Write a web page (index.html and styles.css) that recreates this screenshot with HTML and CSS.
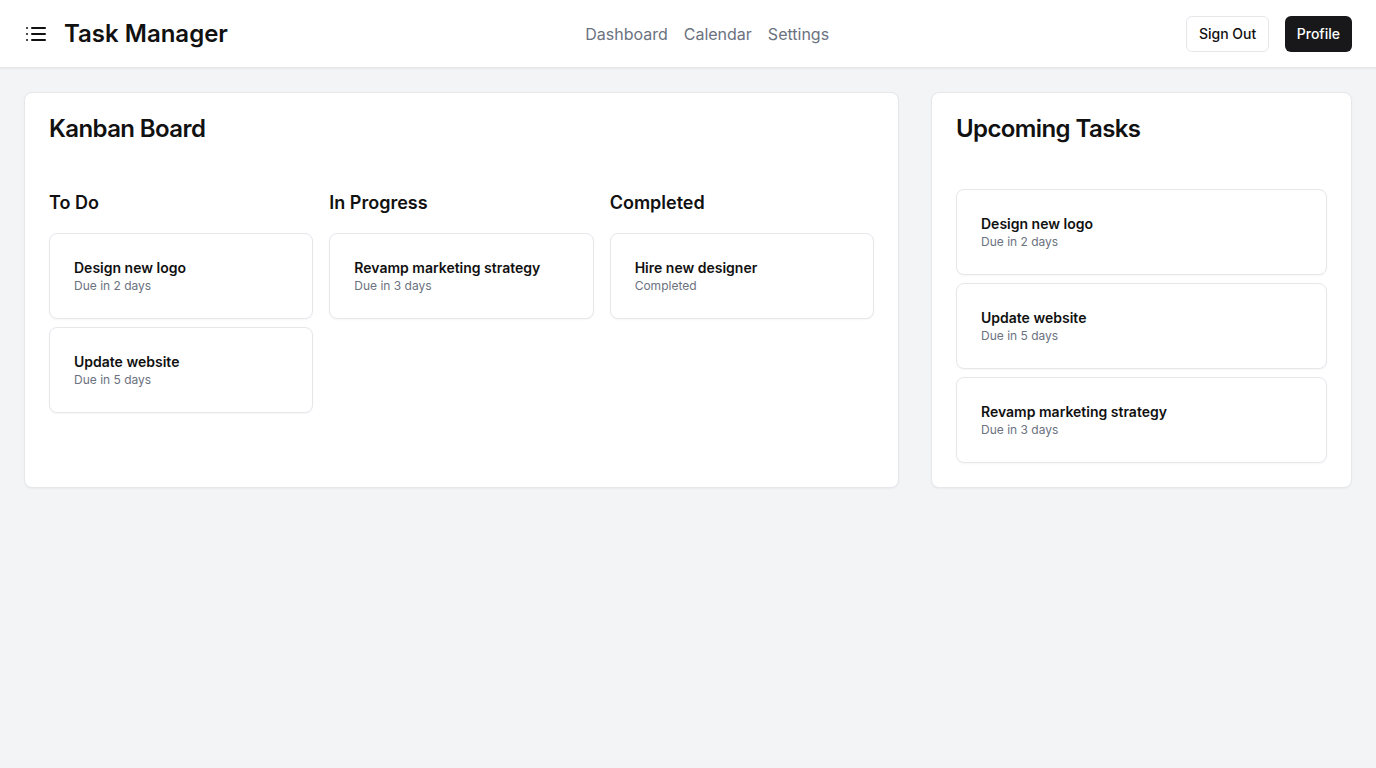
FILE: index.html
```html
<!DOCTYPE html>
<html lang="en">
<head>
<meta charset="utf-8">
<title>Task Manager</title>
<link rel="stylesheet" href="styles.css">
</head>
<body>
<header class="topbar">
  <div class="brand">
    <svg class="menu-icon" width="24" height="24" viewBox="0 0 24 24" fill="none" stroke="currentColor" stroke-width="2" stroke-linecap="round" stroke-linejoin="round"><line x1="8" y1="6" x2="21" y2="6"/><line x1="8" y1="12" x2="21" y2="12"/><line x1="8" y1="18" x2="21" y2="18"/><line x1="3" y1="6" x2="3.01" y2="6"/><line x1="3" y1="12" x2="3.01" y2="12"/><line x1="3" y1="18" x2="3.01" y2="18"/></svg>
    <h1 class="brand-title">Task Manager</h1>
  </div>
  <nav class="nav">
    <a href="#">Dashboard</a>
    <a href="#">Calendar</a>
    <a href="#">Settings</a>
  </nav>
  <div class="actions">
    <button class="btn btn-outline">Sign Out</button>
    <button class="btn btn-dark">Profile</button>
  </div>
</header>
<main class="main">
  <section class="panel">
    <h2 class="panel-title">Kanban Board</h2>
    <div class="board">
      <div class="column">
        <h3 class="column-title">To Do</h3>
        <div class="task"><div class="task-name">Design new logo</div><div class="task-meta">Due in 2 days</div></div>
        <div class="task"><div class="task-name">Update website</div><div class="task-meta">Due in 5 days</div></div>
      </div>
      <div class="column">
        <h3 class="column-title">In Progress</h3>
        <div class="task"><div class="task-name">Revamp marketing strategy</div><div class="task-meta">Due in 3 days</div></div>
      </div>
      <div class="column">
        <h3 class="column-title">Completed</h3>
        <div class="task"><div class="task-name">Hire new designer</div><div class="task-meta">Completed</div></div>
      </div>
    </div>
  </section>
  <section class="panel">
    <h2 class="panel-title">Upcoming Tasks</h2>
    <div class="list">
      <div class="task"><div class="task-name">Design new logo</div><div class="task-meta">Due in 2 days</div></div>
      <div class="task"><div class="task-name">Update website</div><div class="task-meta">Due in 5 days</div></div>
      <div class="task"><div class="task-name">Revamp marketing strategy</div><div class="task-meta">Due in 3 days</div></div>
    </div>
  </section>
</main>
</body>
</html>
```
FILE: styles.css
```css
* { box-sizing: border-box; }
html, body { margin: 0; padding: 0; }
body {
  font-family: Inter, "Noto Sans", sans-serif;
  background: #f3f4f6;
  color: #111;
  min-height: 768px;
}
.topbar {
  height: 68px;
  background: #fff;
  display: flex;
  align-items: center;
  justify-content: space-between;
  padding: 0 24px;
  border-bottom: 1px solid #e5e7eb;
  box-shadow: 0 1px 2px rgba(0,0,0,0.05);
}
.brand { display: flex; align-items: center; gap: 16px; }
.menu-icon { display: block; color: #111; }
.brand-title { margin: 0; font-size: 24px; line-height: 32px; font-weight: 600; color: #111; }
.nav { display: flex; gap: 16px; }
.nav a { color: #6b7280; text-decoration: none; font-size: 16px; line-height: 24px; }
.actions { display: flex; gap: 16px; }
.btn {
  font-family: inherit;
  font-size: 14px;
  font-weight: 500;
  line-height: 20px;
  height: 36px;
  padding: 0 12px;
  border-radius: 6px;
  cursor: pointer;
}
.btn-outline { background: #fff; color: #111; border: 1px solid #e5e7eb; padding: 0 11.5px; }
.btn-dark { background: #18181b; color: #fff; border: none; }
.main {
  display: grid;
  grid-template-columns: 1fr 421px;
  gap: 32px;
  padding: 24px;
  align-items: stretch;
}
.panel {
  background: #fff;
  border: 1px solid #e5e7eb;
  border-radius: 8px;
  padding: 24px;
  box-shadow: 0 1px 2px rgba(0,0,0,0.04);
}
.panel-title {
  margin: 0 0 48px;
  font-size: 24px;
  line-height: 24px;
  font-weight: 600;
  letter-spacing: -0.6px;
}
.board { display: grid; grid-template-columns: repeat(3, 1fr); gap: 16px; }
.column { display: flex; flex-direction: column; gap: 8px; }
.column-title { margin: 0 0 8px; font-size: 18px; line-height: 28px; font-weight: 600; }
.list { display: flex; flex-direction: column; gap: 8px; }
.task {
  border: 1px solid #e5e7eb;
  border-radius: 8px;
  padding: 24px;
  background: #fff;
  box-shadow: 0 1px 2px rgba(0,0,0,0.04);
}
.task-name { font-size: 14px; line-height: 20px; font-weight: 600; color: #111; }
.task-meta { font-size: 12px; line-height: 16px; color: #6b7280; }
```
